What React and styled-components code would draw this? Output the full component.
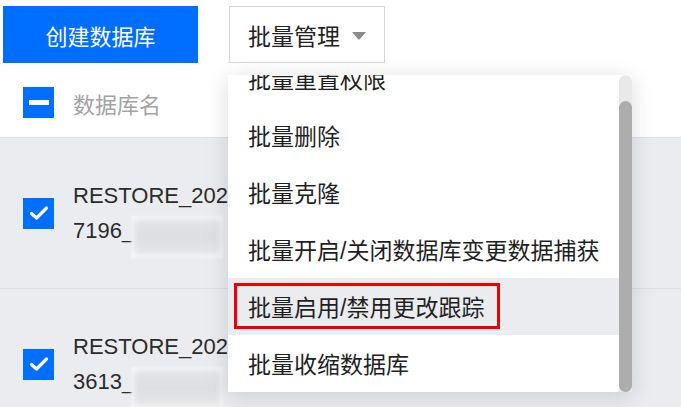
import React from "react";
import styled, { createGlobalStyle } from "styled-components";

const Global = createGlobalStyle`
  html, body { margin: 0; padding: 0; background: #fff; overflow: hidden; }
  body { width: 681px; height: 407px; font-family: "Liberation Sans", "Noto Sans CJK SC", sans-serif; }
`;

const Page = styled.div`
  position: relative;
  width: 681px;
  height: 407px;
  overflow: hidden;
  background: #fff;
`;

const Toolbar = styled.div`
  display: flex;
  gap: 31px;
  padding: 6px 0 0 3px;
  height: 57px;
`;

const PrimaryButton = styled.div`
  width: 195px;
  height: 57px;
  background: #006eff;
  color: #fff;
  font-size: 22px;
  display: flex;
  align-items: center;
  justify-content: center;
`;

const SelectButton = styled.div`
  box-sizing: border-box;
  width: 156px;
  height: 57px;
  border: 1px solid #d3d7de;
  background: #fff;
  color: #222;
  font-size: 23px;
  display: flex;
  align-items: center;
  padding-left: 18px;
  gap: 12px;
`;

const Caret = styled.span`
  width: 0;
  height: 0;
  border-left: 7px solid transparent;
  border-right: 7px solid transparent;
  border-top: 8px solid #8a8a8a;
  margin-top: 2px;
`;

const HeaderRow = styled.div`
  box-sizing: border-box;
  height: 75px;
  display: flex;
  align-items: center;
  padding: 5px 0 0 23px;
  gap: 19px;
  border-bottom: 1px solid #dde0e6;
  color: #a3a3a3;
  font-size: 22px;
`;

const Row = styled.div`
  box-sizing: border-box;
  height: 151px;
  display: flex;
  align-items: center;
  padding-left: 23px;
  gap: 19px;
  background: #ebecf0;
  border-bottom: 1px solid #dcdee4;
`;

const Box = styled.span`
  flex: none;
  width: 31px;
  height: 31px;
  background: #006eff;
  display: flex;
  align-items: center;
  justify-content: center;
`;

const Dash = styled.span`
  width: 20px;
  height: 5px;
  background: #fff;
`;

const NameCell = styled.div`
  color: #2b2b2b;
  font-size: 22px;
  line-height: 35px;
  white-space: nowrap;
`;

const Redact = styled.span`
  display: inline-block;
  vertical-align: top;
  width: 92px;
  height: 42px;
  margin: 3px 0 -11px -3px;
  background: linear-gradient(180deg, #e4e5e9, #dedfe3 50%, #e6e7ea);
  box-shadow: inset 0 0 6px 3px rgba(255,255,255,0.7);
  filter: blur(1px);
`;

const Menu = styled.div`
  position: absolute;
  left: 228px;
  top: 75px;
  width: 404px;
  height: 317px;
  background: #fff;
  display: flex;
  box-shadow: 0 4px 22px rgba(0, 0, 0, 0.14);
  overflow: hidden;
`;

const MenuList = styled.div`
  flex: 1;
  overflow: hidden;
`;

const MenuInner = styled.div`
  margin-top: -25.5px;
`;

const Item = styled.div`
  height: 57px;
  display: flex;
  align-items: center;
  padding-left: 6px;
  font-size: 23px;
  color: #1f1f1f;
  white-space: nowrap;
  background: ${(p) => (p.$active ? "#ebecf0" : "#fff")};
`;

const ItemLabel = styled.span`
  box-sizing: border-box;
  display: inline-flex;
  align-items: center;
  height: 46px;
  padding: 0 13px 0 11px;
  border: 3px solid ${(p) => (p.$marked ? "#f00000" : "transparent")};
`;

const Track = styled.div`
  width: 13px;
  flex: none;
  background: #e9e9e9;
  border-radius: 7px 7px 0 0;
  display: flex;
  flex-direction: column;
  justify-content: flex-end;
`;

const Thumb = styled.div`
  height: 291px;
  background: #adadad;
  border-radius: 7px;
`;

const Check = () => (
  <svg width="20" height="16" viewBox="0 0 20 16">
    <polyline points="2.5,8.5 7.5,13 17.5,3" fill="none" stroke="#fff" strokeWidth="3.2" strokeLinecap="round" strokeLinejoin="round" />
  </svg>
);

const items = [
  "批量重置权限",
  "批量删除",
  "批量克隆",
  "批量开启/关闭数据库变更数据捕获",
  "批量启用/禁用更改跟踪",
  "批量收缩数据库",
];

export default function App() {
  return (
    <Page>
      <Global />
      <Toolbar>
        <PrimaryButton>创建数据库</PrimaryButton>
        <SelectButton>
          批量管理
          <Caret />
        </SelectButton>
      </Toolbar>
      <HeaderRow>
        <Box>
          <Dash />
        </Box>
        数据库名
      </HeaderRow>
      <Row>
        <Box>
          <Check />
        </Box>
        <NameCell>
          RESTORE_2025
          <br />
          7196_<Redact />
        </NameCell>
      </Row>
      <Row>
        <Box>
          <Check />
        </Box>
        <NameCell>
          RESTORE_2025
          <br />
          3613_<Redact />
        </NameCell>
      </Row>
      <Menu>
        <MenuList>
          <MenuInner>
            {items.map((t, i) => (
              <Item key={t} $active={i === 4}>
                <ItemLabel $marked={i === 4}>{t}</ItemLabel>
              </Item>
            ))}
          </MenuInner>
        </MenuList>
        <Track>
          <Thumb />
        </Track>
      </Menu>
    </Page>
  );
}
